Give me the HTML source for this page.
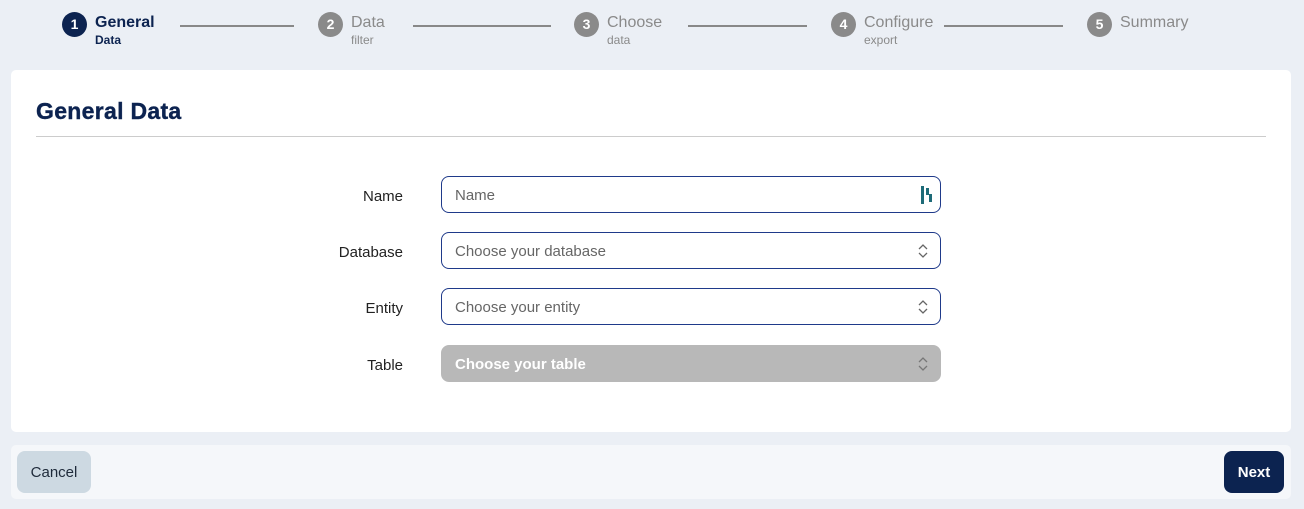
<!DOCTYPE html>
<html><head><style>
*{box-sizing:border-box;margin:0;padding:0}
body{width:1304px;height:509px;background:#ebeff5;font-family:"Liberation Sans",sans-serif;position:relative;overflow:hidden;color:#1e2a3a}
.step{position:absolute;top:12px;display:flex}
.num{width:25px;height:25px;border-radius:50%;background:#8a8a8a;color:#fff;font-weight:bold;font-size:14px;text-align:center;line-height:25px}
.lab{margin-left:8px;font-size:16px;color:#8a8a8a;line-height:22px}
.lab small{display:block;font-size:12px;line-height:13px}
.active .num{background:#0c2350}
.active .lab{color:#0c2350;font-weight:bold}
.line{position:absolute;top:25px;height:1.5px;background:#888}
.card{position:absolute;left:11px;top:70px;width:1280px;height:362px;background:#fff;border-radius:5px}
h1{position:absolute;left:25px;top:28px;font-size:23px;color:#0c2350;font-weight:900;letter-spacing:0.3px;-webkit-text-stroke:0.4px #0c2350}
.hr{position:absolute;left:25px;top:66px;width:1230px;height:1px;background:#ccc}
.lbl{position:absolute;width:392px;text-align:right;font-size:15px;color:#222}
.inp{position:absolute;left:430px;width:500px;height:37px;border:1px solid #1f3a8a;border-radius:8px;font-size:15px;color:#666;padding-left:13px;line-height:37px}
.inp.dis{background:#b8b8b8;border-color:#b8b8b8;color:#fff;font-weight:bold}
.chev{position:absolute;right:12px;top:10px}
.foot{position:absolute;left:11px;top:445px;width:1280px;height:54px;background:#f5f7fa;border-radius:5px}
.btn{position:absolute;top:6px;height:42px;border-radius:8px;font-size:15px;line-height:44px;text-align:center}
</style></head><body>
<div class="step active" style="left:62px"><div class="num">1</div><div class="lab">General<small>Data</small></div></div>
<div class="line" style="left:180px;width:114px"></div>
<div class="step" style="left:318px"><div class="num">2</div><div class="lab">Data<small>filter</small></div></div>
<div class="line" style="left:413px;width:138px"></div>
<div class="step" style="left:574px"><div class="num">3</div><div class="lab">Choose<small>data</small></div></div>
<div class="line" style="left:688px;width:119px"></div>
<div class="step" style="left:831px"><div class="num">4</div><div class="lab">Configure<small>export</small></div></div>
<div class="line" style="left:944px;width:119px"></div>
<div class="step" style="left:1087px"><div class="num">5</div><div class="lab">Summary</div></div>

<div class="card">
<h1>General Data</h1><div class="hr"></div>
<div class="lbl" style="top:118px">Name</div>
<div class="inp" style="top:106px">Name<svg class="chev" style="top:8px;right:6px" width="14" height="20"><rect x="1" y="1" width="3" height="18" fill="#1e6b78"/><rect x="6" y="3" width="3" height="7" fill="#1e6b78"/><rect x="9" y="9" width="3" height="8" fill="#1e6b78"/></svg></div>
<div class="lbl" style="top:174px">Database</div>
<div class="inp" style="top:162px">Choose your database<svg class="chev" width="10" height="16"><path d="M1 6l4-4 4 4M1 10l4 4 4-4" stroke="#666" fill="none" stroke-width="1.3"/></svg></div>
<div class="lbl" style="top:230px">Entity</div>
<div class="inp" style="top:218px">Choose your entity<svg class="chev" width="10" height="16"><path d="M1 6l4-4 4 4M1 10l4 4 4-4" stroke="#666" fill="none" stroke-width="1.3"/></svg></div>
<div class="lbl" style="top:287px">Table</div>
<div class="inp dis" style="top:275px">Choose your table<svg class="chev" width="10" height="16"><path d="M1 6l4-4 4 4M1 10l4 4 4-4" stroke="#777" fill="none" stroke-width="1.3"/></svg></div>
</div>

<div class="foot">
<div class="btn" style="left:6px;width:74px;background:#cdd9e2;color:#1e2a3a">Cancel</div>
<div class="btn" style="left:1213px;width:60px;background:#0c2350;color:#fff;font-weight:bold">Next</div>
</div>
</body></html>
